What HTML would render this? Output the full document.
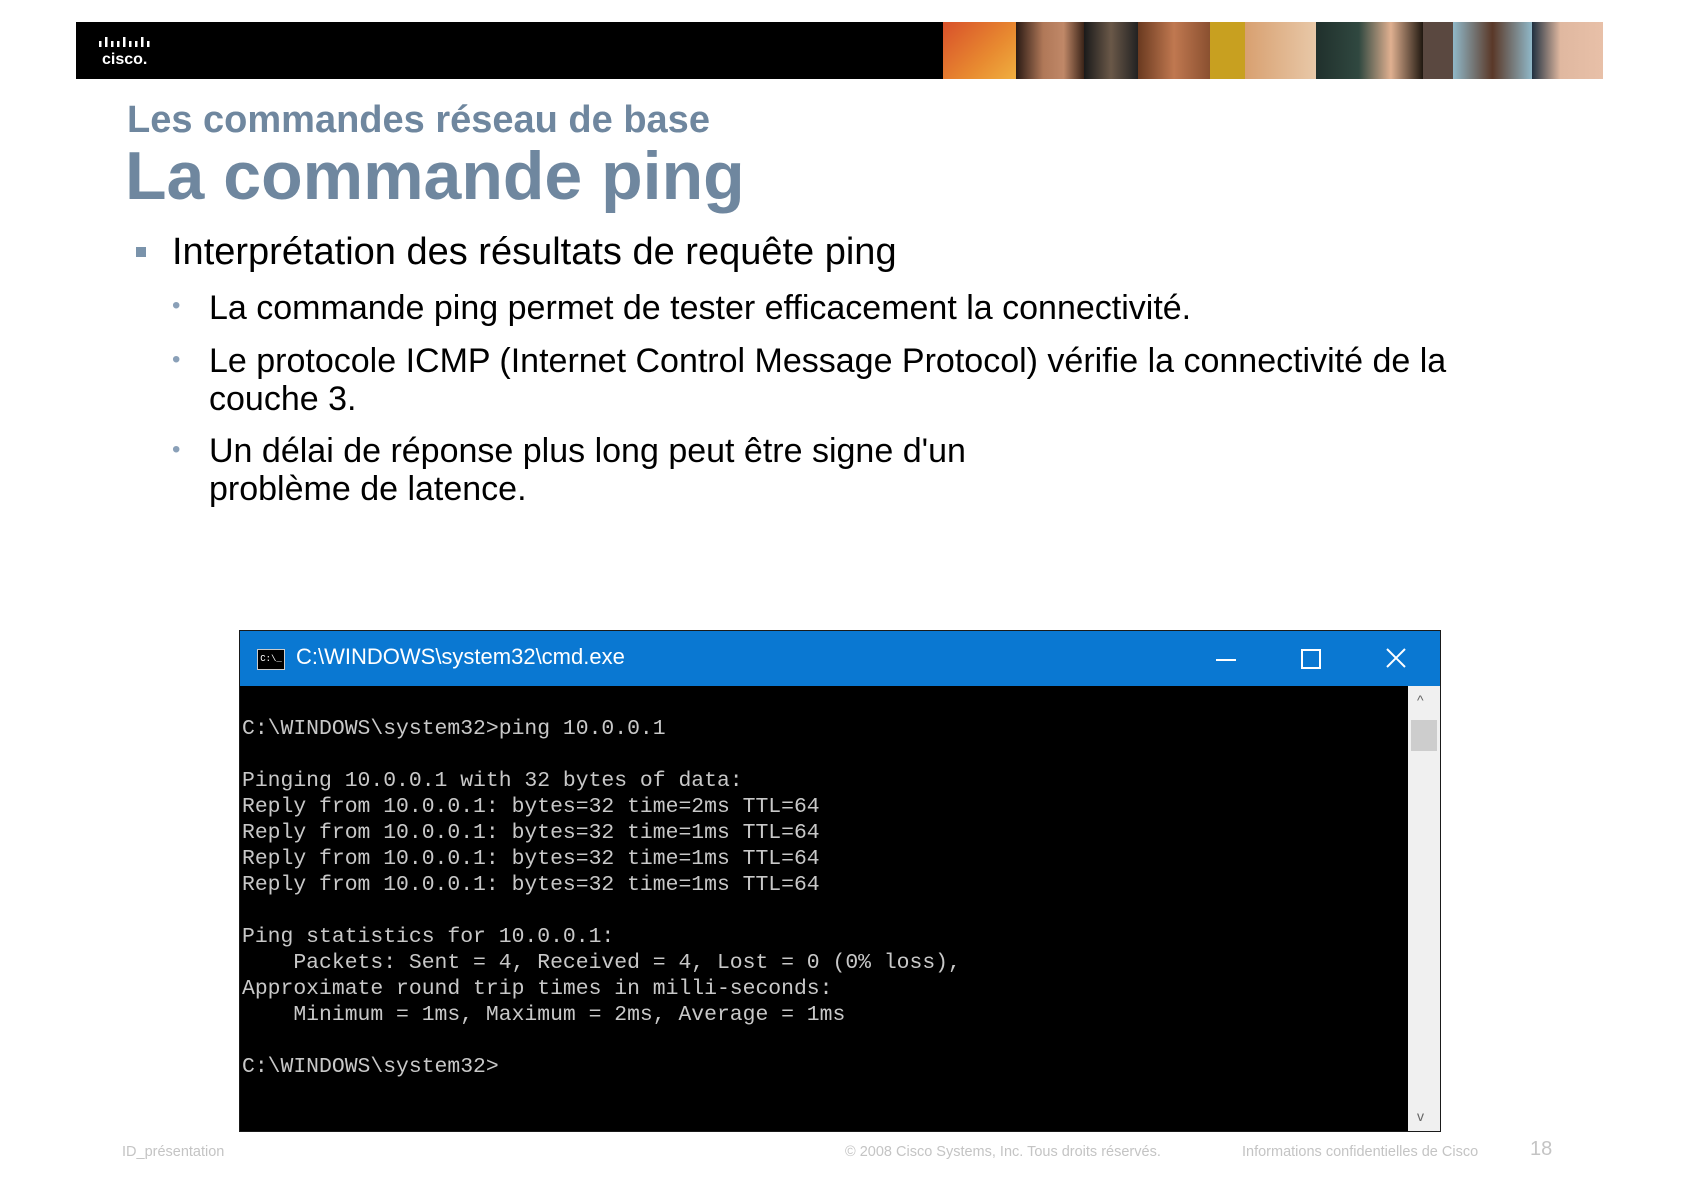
<!DOCTYPE html>
<html><head><meta charset="utf-8"><style>
*{margin:0;padding:0}
body{width:1683px;height:1190px;background:#fff;position:relative;overflow:hidden;font-family:"Liberation Sans",Arial,sans-serif}
.a{position:absolute;white-space:nowrap}
.bar{left:76px;top:22px;width:1527px;height:57px;background:#000}
.ph{position:absolute;top:22px;height:57px}
.t{color:#6f879f;font-weight:bold}
.b{color:#000}
.term{left:239px;top:630px;width:1200px;height:500px;background:#000;border:1px solid #1a1a1a}
.tb{position:absolute;left:0;top:0;width:1200px;height:55px;background:#0a78d2}
.mono{font-family:"Liberation Mono",monospace;font-size:21.4px;color:#c8c8c8;line-height:26px}
.foot{color:#c4c4c4;font-size:14.5px}
</style></head><body>
<div class="a bar"></div>
<div class="ph" style="left:943px;width:75px;background:linear-gradient(135deg,#d8502a,#e88a30 60%,#f0b040)"></div>
<div class="ph" style="left:1016px;width:68px;background:linear-gradient(90deg,#2a1a14,#b07858 40%,#c08868 70%,#3a2418)"></div>
<div class="ph" style="left:1084px;width:54px;background:linear-gradient(90deg,#1a1a1a,#6a5848 50%,#222)"></div>
<div class="ph" style="left:1138px;width:72px;background:linear-gradient(90deg,#6a3a20,#c07850 50%,#8a5030)"></div>
<div class="ph" style="left:1210px;width:35px;background:#c8a020"></div>
<div class="ph" style="left:1245px;width:71px;background:linear-gradient(90deg,#d8a070,#e8c8a8)"></div>
<div class="ph" style="left:1316px;width:107px;background:linear-gradient(90deg,#20302c,#304840 40%,#e0b090 70%,#201810)"></div>
<div class="ph" style="left:1423px;width:30px;background:#5a4840"></div>
<div class="ph" style="left:1453px;width:79px;background:linear-gradient(90deg,#90b8c8,#5a3828 50%,#90b8c8)"></div>
<div class="ph" style="left:1532px;width:71px;background:linear-gradient(90deg,#203040,#e0b8a0 40%,#e8c0a8)"></div>
<svg class="a" style="left:98px;top:34px" width="62" height="16"><g fill="#fff"><rect x="1" y="7" width="2.5" height="6"/><rect x="7" y="3" width="2.5" height="10"/><rect x="13" y="7" width="2.5" height="6"/><rect x="19" y="7" width="2.5" height="6"/><rect x="25" y="3" width="2.5" height="10"/><rect x="31" y="7" width="2.5" height="6"/><rect x="37" y="7" width="2.5" height="6"/><rect x="43" y="3" width="2.5" height="10"/><rect x="49" y="7" width="2.5" height="6"/></g></svg>
<div class="a" style="left:102px;top:51px;color:#fff;font-size:16px;font-weight:bold">cisco.</div>

<div class="a t" style="left:127px;top:99px;font-size:38px">Les commandes réseau de base</div>
<div class="a t" style="left:125px;top:137px;font-size:68px">La commande ping</div>

<div class="a" style="left:136px;top:247px;width:10px;height:10px;background:#7a93ab"></div>
<div class="a b" style="left:172px;top:231px;font-size:38px">Interprétation des résultats de requête ping</div>
<div class="a" style="left:172px;top:292px;color:#8aa0b8;font-size:24px">•</div>
<div class="a b" style="left:209px;top:289px;font-size:34px">La commande ping permet de tester efficacement la connectivité.</div>
<div class="a" style="left:172px;top:346px;color:#8aa0b8;font-size:24px">•</div>
<div class="a b" style="left:209px;top:342px;font-size:34px;line-height:38px">Le protocole ICMP (Internet Control Message Protocol) vérifie la connectivité de la<br>couche 3.</div>
<div class="a" style="left:172px;top:436px;color:#8aa0b8;font-size:24px">•</div>
<div class="a b" style="left:209px;top:432px;font-size:34px;line-height:38px">Un délai de réponse plus long peut être signe d'un<br>problème de latence.</div>

<div class="a term">
 <div class="tb">
  <div style="position:absolute;left:17px;top:18px;width:26px;height:19px;background:#000;border:1px solid #ccc;color:#fff;font-size:9px;font-family:'Liberation Mono',monospace;line-height:19px;text-align:center">C:\_</div>
  <div style="position:absolute;left:56px;top:13px;color:#fff;font-size:22px">C:\WINDOWS\system32\cmd.exe</div>
  <div style="position:absolute;left:976px;top:28px;width:20px;height:2px;background:#fff"></div>
  <div style="position:absolute;left:1061px;top:18px;width:16px;height:16px;border:2px solid #fff"></div>
  <svg style="position:absolute;left:1146px;top:17px" width="20" height="20"><path d="M1 1L19 19M19 1L1 19" stroke="#fff" stroke-width="2"/></svg>
 </div>
 <div style="position:absolute;left:1168px;top:55px;width:32px;height:445px;background:#f0f0f0">
  <div style="position:absolute;left:3px;top:34px;width:26px;height:31px;background:#cdcdcd"></div>
  <div style="position:absolute;left:9px;top:6px;color:#666;font-size:14px">^</div>
  <div style="position:absolute;left:9px;top:422px;color:#666;font-size:14px">v</div>
 </div>
 <div class="a mono" style="left:2px;top:85px">C:\WINDOWS\system32>ping 10.0.0.1<br><br>Pinging 10.0.0.1 with 32 bytes of data:<br>Reply from 10.0.0.1: bytes=32 time=2ms TTL=64<br>Reply from 10.0.0.1: bytes=32 time=1ms TTL=64<br>Reply from 10.0.0.1: bytes=32 time=1ms TTL=64<br>Reply from 10.0.0.1: bytes=32 time=1ms TTL=64<br><br>Ping statistics for 10.0.0.1:<br>&nbsp;&nbsp;&nbsp;&nbsp;Packets: Sent = 4, Received = 4, Lost = 0 (0% loss),<br>Approximate round trip times in milli-seconds:<br>&nbsp;&nbsp;&nbsp;&nbsp;Minimum = 1ms, Maximum = 2ms, Average = 1ms<br><br>C:\WINDOWS\system32></div>
</div>

<div class="a foot" style="left:122px;top:1144px">ID_présentation</div>
<div class="a foot" style="left:845px;top:1144px">© 2008 Cisco Systems, Inc. Tous droits réservés.</div>
<div class="a foot" style="left:1242px;top:1144px">Informations confidentielles de Cisco</div>
<div class="a foot" style="left:1530px;top:1138px;font-size:20px">18</div>
</body></html>
